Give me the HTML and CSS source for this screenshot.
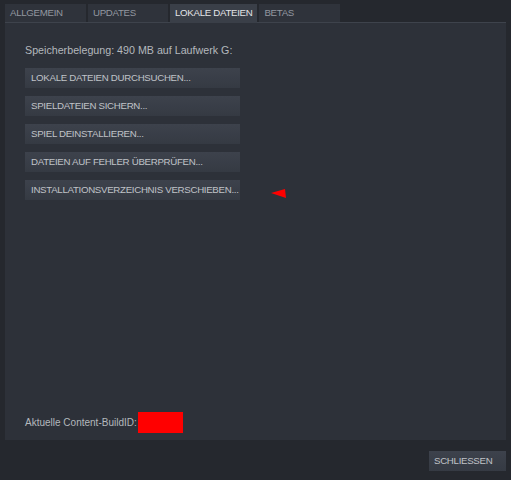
FILE: index.html
```html
<!DOCTYPE html>
<html lang="de">
<head>
<meta charset="utf-8">
<title>Eigenschaften</title>
<link rel="stylesheet" href="styles.css">
</head>
<body>
<div class="window">
  <div class="tabs">
    <div class="tab">ALLGEMEIN</div>
    <div class="tab">UPDATES</div>
    <div class="tab active">LOKALE DATEIEN</div>
    <div class="tab">BETAS</div>
  </div>
  <div class="panel">
    <div class="usage">Speicherbelegung: 490 MB auf Laufwerk G:</div>
    <div class="actions">
      <div class="btn">LOKALE DATEIEN DURCHSUCHEN...</div>
      <div class="btn">SPIELDATEIEN SICHERN...</div>
      <div class="btn">SPIEL DEINSTALLIEREN...</div>
      <div class="btn">DATEIEN AUF FEHLER ÜBERPRÜFEN...</div>
      <div class="row">
        <div class="btn">INSTALLATIONSVERZEICHNIS VERSCHIEBEN...</div>
        <svg class="arrow" width="16" height="11" viewBox="0 0 16 11"><polygon points="0,4 14,0 15,9" fill="#ff0000"/></svg>
      </div>
    </div>
    <div class="spacer"></div>
    <div class="build">Aktuelle Content-BuildID:<span class="redact"></span></div>
  </div>
  <div class="footer">
    <div class="btn close">SCHLIESSEN</div>
  </div>
</div>
</body>
</html>
```
FILE: styles.css
```css
html, body {
  margin: 0;
  padding: 0;
  background: #25282e;
  font-family: "Liberation Sans", Arial, sans-serif;
  width: 511px;
  height: 480px;
  overflow: hidden;
}
.window {
  display: flex;
  flex-direction: column;
  height: 480px;
  padding: 4px 5px 0 5px;
  box-sizing: border-box;
}
.tabs {
  display: flex;
  gap: 2px;
  height: 18px;
  border-bottom: 1px solid #3e434c;
}
.tab {
  height: 18px;
  box-sizing: border-box;
  padding: 0 5px;
  line-height: 18px;
  font-size: 9.7px;
  letter-spacing: -0.3px;
  color: #9398a0;
  background: #2f333b;
  min-width: 81px;
}
.tab:nth-child(2) { min-width: 80px; }
.tab.active {
  background: #3a3f48;
  color: #e2e4e7;
  min-width: 87px;
  height: 19px;
  margin-bottom: -1px;
}
.panel {
  height: 417px;
  background: #2d3139;
  display: flex;
  flex-direction: column;
  padding: 0 20px;
  box-sizing: border-box;
}
.usage {
  font-size: 10.7px;
  color: #b4b8bd;
  margin-top: 21px;
  line-height: 13px;
}
.actions {
  display: flex;
  flex-direction: column;
  gap: 8px;
  margin-top: 11px;
}
.row {
  display: flex;
  align-items: flex-start;
}
.btn {
  width: 215px;
  height: 20px;
  box-sizing: border-box;
  padding-left: 6px;
  line-height: 20px;
  font-size: 9.7px;
  letter-spacing: -0.3px;
  color: #c0c3c8;
  background: linear-gradient(#3d424c, #353a43);
  white-space: nowrap;
  overflow: hidden;
}
.arrow {
  margin-left: 31px;
  margin-top: 9px;
}
.spacer { flex: 1; }
.build {
  font-size: 10px;
  color: #b4b8bd;
  display: flex;
  align-items: center;
  margin-bottom: 7px;
}
.redact {
  display: inline-block;
  width: 45px;
  height: 21px;
  background: #ff0000;
  margin-left: 1px;
}
.footer {
  display: flex;
  justify-content: flex-end;
  padding-top: 11px;
}
.btn.close {
  width: 77px;
  height: 20px;
  padding-left: 5px;
}
```
